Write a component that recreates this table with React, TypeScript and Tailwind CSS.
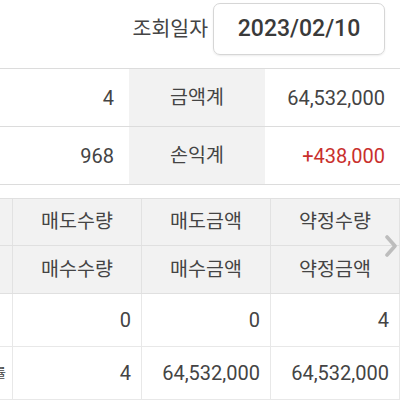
import React from "react";

const FONT = { fontFamily: "Roboto, 'Noto Sans CJK KR', 'Noto Sans', sans-serif" };

const SUMMARY = [
    { count: "4", label: "금액계", value: "64,532,000", red: false },
    { count: "968", label: "손익계", value: "+438,000", red: true },
];

const HEAD_ROWS = [
    ["", "매도수량", "매도금액", "약정수량"],
    ["", "매수수량", "매수금액", "약정금액"],
];

const DATA_ROWS = [
    ["", "0", "0", "4"],
    ["수익률", "4", "64,532,000", "64,532,000"],
];

export default function App() {
    return (
        <div className="w-[400px] h-[400px] overflow-hidden bg-white text-[#444]" style={FONT}>
            {/* 조회일자 */}
            <div className="flex items-start justify-end h-[68px] pt-[3px] pr-[15px]">
                <div className="flex items-center h-[52px] mr-[5px] text-[20.5px]">조회일자</div>
                <div className="flex items-center justify-center w-[172px] h-[52px] rounded-[7px] border border-[#d6d6d6] shadow-[0_1px_2px_rgba(0,0,0,0.08)] text-[23px] font-medium text-[#3a3a3a]">
                    2023/02/10
                </div>
            </div>

            {/* summary */}
            <div className="border-t border-[#dcdcdc]">
                {SUMMARY.map((row, i) => (
                    <div key={i} className="grid grid-cols-[129px_136px_1fr] h-[58px] border-b border-[#dcdcdc]">
                        <div className="flex items-center justify-end pr-[15px] text-[20px]">{row.count}</div>
                        <div className="flex items-center justify-center bg-[#f2f2f2] text-[19.5px]">{row.label}</div>
                        <div className={`flex items-center justify-end pr-[15px] text-[20px] ${row.red ? 'text-[#c9302c]' : ''}`}>{row.value}</div>
                    </div>
                ))}
            </div>

            {/* table */}
            <div className="relative mt-[13px] overflow-hidden border-t border-[#e0e0e0]">
                <div className="ml-[-67px]">
                    {HEAD_ROWS.map((row, i) => (
                        <div key={i} className={`grid grid-cols-[80px_129px_129px_129px] bg-[#f2f2f2] border-b border-[#e0e0e0] ${i === 0 ? 'h-[47px]' : 'h-[48px]'}`}>
                            {row.map((cell, j) => (
                                <div key={j} className="flex items-center justify-center border-r border-[#e2e2e2] text-[19.5px]">{cell}</div>
                            ))}
                        </div>
                    ))}
                    {DATA_ROWS.map((row, i) => (
                        <div key={i} className="grid grid-cols-[80px_129px_129px_129px] h-[53px] border-b border-[#e8e8e8]">
                            {row.map((cell, j) => (
                                <div key={j} className={`flex items-center justify-end border-r border-[#e8e8e8] ${j === 0 ? 'pr-[6px] text-[13px]' : 'pr-[10px] text-[20px]'}`}>{cell}</div>
                            ))}
                        </div>
                    ))}
                </div>
                <svg className="absolute right-[3px] top-[36px]" width="12" height="22" viewBox="0 0 12 22">
                    <polyline points="2,2 10,11 2,20" fill="none" stroke="#bdbdbd" strokeWidth="3.6" strokeLinecap="round" strokeLinejoin="round" />
                </svg>
            </div>
        </div>
    )
}
